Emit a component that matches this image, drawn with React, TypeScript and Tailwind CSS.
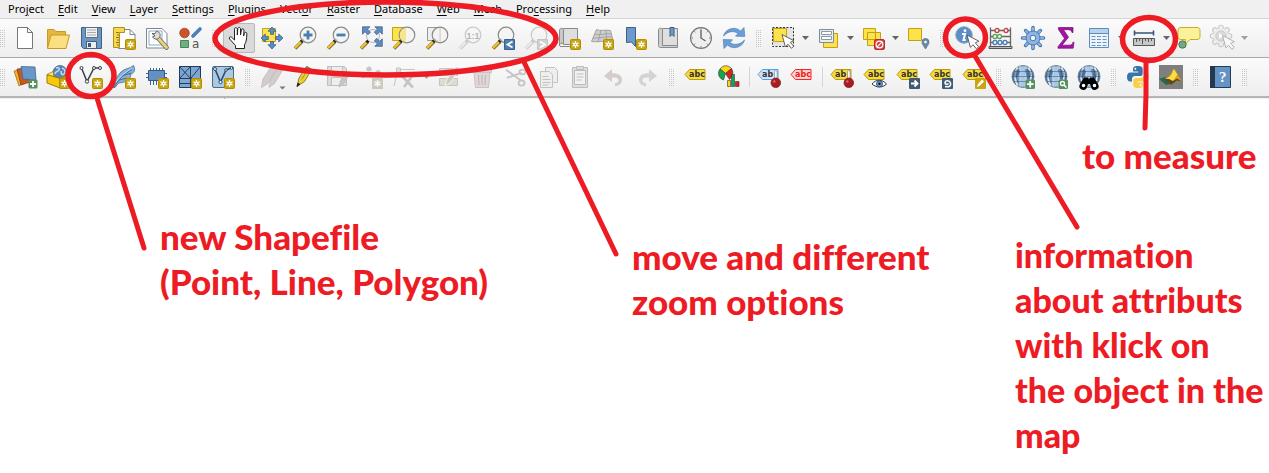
import type { ReactNode } from "react";

/* ---------- shared icon parts ---------- */

const Star = () => (
  <g>
    <rect x="13.5" y="13.5" width="10" height="10" rx="1" fill="#c9a50f" stroke="#b08f00" />
    <path d="M18.5 15v7M15.4 16.8l6.2 3.4M15.4 20.2l6.2-3.4" stroke="#fff" strokeWidth="1.3" />
    <circle cx="18.5" cy="18.5" r="1.9" fill="#fff" />
    <circle cx="18.5" cy="18.5" r=".7" fill="#c9a50f" />
  </g>
);

const Cursor = ({ x, y }: { x: number; y: number }) => (
  <path
    transform={`translate(${x} ${y})`}
    d="M0 0l3.4 12.4 2.6-2.7 3.4 4.1 2.3-2-3.4-4 3.6-1.6z"
    fill="#fff"
    stroke="#555"
    strokeWidth=".9"
  />
);

const Lens = ({ children, faded }: { children?: ReactNode; faded?: boolean }) => (
  <g opacity={faded ? 0.4 : 1}>
    <path d="M9 15.5L2 22.5" stroke={faded ? "#999" : "#8a7433"} strokeWidth="3.8" />
    <path d="M8.5 15.5L2 22" stroke={faded ? "#ddd" : "#f5c52c"} strokeWidth="2" />
    <path d="M10.8 13.2L8 16" stroke={faded ? "#888" : "#222"} strokeWidth="3.2" />
    <circle cx="15" cy="9" r="7.8" fill="#f4f4f2" fillOpacity=".82" stroke="#8b8b86" strokeWidth="1.2" />
    {children}
  </g>
);

const Tag = ({ text = "abc", red, blue }: { text?: string; red?: boolean; blue?: boolean }) => (
  <g>
    <path
      d="M5.5 4.5h15.5v10H5.5L1 9.5z"
      fill={red ? "#ffd6d6" : blue ? "#cfe4fb" : "#f6dc38"}
      stroke={red ? "#ff2020" : blue ? "#5a9be0" : "#b79a14"}
    />
    <text x="5" y="12" fontSize="8" fontWeight="700" fontFamily="DejaVu Sans, sans-serif" fill={red ? "#f01818" : "#333"}>
      {text}
    </text>
  </g>
);

const Pin = () => (
  <g>
    <rect x="17.5" y="5.5" width="2.6" height="10" rx="1.3" fill="#fff" stroke="#888" strokeWidth=".7" />
    <circle cx="18.8" cy="17.8" r="4.8" fill="#a81c22" stroke="#7d1216" strokeWidth=".7" />
    <circle cx="17.3" cy="16.5" r="1.2" fill="#d46a6e" />
  </g>
);

const Globe = () => (
  <g>
    <circle cx="12" cy="11.5" r="11" fill="#6b9acb" stroke="#7d8a98" />
    <path d="M4.5 3.5c-4 5-4 11 0 16l3-1c-2-5-2-9 0-14zM19.5 3.5c4 5 4 11 0 16l-3-1c2-5 2-9 0-14z" fill="#46719f" />
    <path d="M6.5 2.5C3.5 8 3.5 15 6.5 20.5M17.5 2.5c3 5.5 3 12.5 0 18" stroke="#e4e4e2" strokeWidth="2" />
    <path d="M9.5 1.5h5v20h-5z" fill="#a9c8e6" />
    <path d="M9 1.5v20M15 1.5v20" stroke="#e9eef3" />
    <path d="M1 11.5h22M3 6.5h18M3 16.5h18" stroke="#29486b" strokeWidth=".8" opacity=".6" />
    <path d="M5 5c2-2 4 0 4 2s-2 3-3 5-2 0-3-1 0-4 2-6zM15 4c3 0 4 2 5 4s-1 5-2.5 6-2-4-3-6-1-4 .5-4z" fill="#294b72" opacity=".5" />
  </g>
);

const arrowUp = "M12 1l4 4.3h-2.5v3h-3v-3H8z";
const swoosh = "M1.5 10C3 3 13-.5 18.5 5L22 1.5l.8 9-9.3-.3L16 7.5C12 4.5 6 5 1.5 10z";
const gearTeeth = "M11 1.5v17M2.5 10h17M5 4l12 12M17 4L5 16";

const icons: Record<string, ReactNode> = {
  newFile: <path d="M4.5 1.5h10l5 5v16h-15zM14.5 1.5v5h5" fill="#fff" stroke="#777" />,
  open: (
    <g stroke="#c99a20" strokeLinejoin="round">
      <path d="M1.5 21.5v-18h6.5l2 2h9.5v16z" fill="#e3b740" />
      <path d="M1.5 22.5l3.5-13.5h18.5l-3.5 13.5z" fill="#fbdf83" />
    </g>
  ),
  save: (
    <g>
      <path d="M2.5 1.5h20v21h-18l-2-2z" fill="#6c96c3" stroke="#41617f" />
      <path d="M6.5 1.5h12v10h-12z" fill="#f2f2ee" stroke="#56718c" />
      <path d="M8 4h9M8 6.5h9M8 9h9" stroke="#aaa" />
      <path d="M7.5 15.5h10v7h-10z" fill="#eee" stroke="#41617f" />
      <path d="M9 17h3v4H9z" fill="#3d5d7c" />
    </g>
  ),
  layout: (
    <g>
      <path d="M6.5 3.5H18l5 5v14H6.5z" fill="#fff" stroke="#7c8794" />
      <path d="M18 3.5v5h5" stroke="#7c8794" />
      <path d="M1.5 1.5h11v5h-5v15h-6z" fill="#f5d84e" stroke="#b3901a" />
      <path d="M4 6.5h3M5 9h2M4 11.5h3M5 14h2M4 16.5h3M5 19h2" stroke="#8f7110" />
      <Star />
    </g>
  ),
  manager: (
    <g>
      <path d="M1.5 2.5H17l5 5v14.5H1.5z" fill="#fff" stroke="#7c8794" />
      <path d="M4 5h13v14H4z" stroke="#8ba9cc" />
      <path d="M12.5 11.5l9 10" stroke="#6d6a55" strokeWidth="4.6" strokeLinecap="round" />
      <path d="M13 12l8.5 9.5" stroke="#e6d27d" strokeWidth="3" strokeLinecap="round" />
      <path d="M7 7.5l3 .2 1.5-2.5C15 6 16 9 14.5 11.5c-2 2.5-5.5 2-7-.7l2.5-1z" fill="#ddd" stroke="#555" strokeWidth=".9" />
    </g>
  ),
  style: (
    <g>
      <circle cx="6.5" cy="7" r="4.8" fill="#cb5429" stroke="#9a4020" strokeWidth=".7" />
      <path d="M15 10L22 3" stroke="#4d7fb8" strokeWidth="3.6" strokeLinecap="round" />
      <path d="M2.5 14.5h8v7h-8z" fill="#74ad83" stroke="#3f8a56" />
      <text x="14" y="22" fontSize="12" fontFamily="DejaVu Sans, sans-serif" fill="#555">a</text>
    </g>
  ),
  hand: (
    <path
      d="M8.5 14V3.2c0-2 2.5-2 2.8 0V9l.5-6.2c.2-2 2.7-1.8 2.7 0V9l.9-5c.4-1.8 2.7-1.5 2.6.3L17.6 10l.8-2.8c.5-1.6 2.6-1 2.5.6-.3 5-.5 8-2.4 11v3.7H9.5v-3L3.6 13c-1-1.7.8-2.9 2.1-1.7z"
      transform="translate(-1 0)"
      fill="#fff"
      stroke="#222"
      strokeLinejoin="round"
    />
  ),
  panSel: (
    <g>
      <path d="M2.5 2.5h13v13h-13z" fill="#fce34c" stroke="#c3a018" />
      <g fill="#5c8dc4" stroke="#31557c" strokeWidth=".7">
        <path d={arrowUp} />
        <path d={arrowUp} transform="rotate(90 12 12)" />
        <path d={arrowUp} transform="rotate(180 12 12)" />
        <path d={arrowUp} transform="rotate(270 12 12)" />
      </g>
    </g>
  ),
  zoomIn: <Lens><path d="M15 4.5v9M10.5 9h9" stroke="#4b7db5" strokeWidth="2.8" /></Lens>,
  zoomOut: <Lens><path d="M10.5 9h9" stroke="#4b7db5" strokeWidth="2.8" /></Lens>,
  zoomFull: (
    <g>
      <path d="M9 15.5L2 22.5" stroke="#8a7433" strokeWidth="3.6" />
      <path d="M8.5 15.5L2 22" stroke="#f5c52c" strokeWidth="2" />
      <path d="M10.5 13.5L7.5 16.5" stroke="#222" strokeWidth="3" />
      <circle cx="14" cy="10" r="6.5" fill="#f4f4f4" stroke="#b5b5b5" />
      <g fill="#5c8dc4" stroke="#38597b" strokeWidth=".7">
        <path d="M3.5.8h7.5L8.5 3.2l3 3-2.5 2.5-3-3-2.5 2.6z" />
        <path d="M23.3.8v7.5l-2.5-2.6-3 3-2.5-2.5 3-3L15.8.8z" />
        <path d="M23.3 20.3h-7.5l2.5-2.5-3-3 2.5-2.5 3 3 2.5-2.5z" />
      </g>
    </g>
  ),
  zoomSel: (
    <g>
      <path d="M.5 1.5h13v13H.5z" fill="#fce34c" stroke="#c3a018" />
      <Lens><path d="M9 5c1-2 3-3 5-3v14c-4 0-7-4-6-9z" fill="#f4e68c" /></Lens>
    </g>
  ),
  zoomLayer: (
    <g>
      <path d="M2.5 1.5h13v13h-13z" fill="#eee" stroke="#999" />
      <Lens><path d="M15 2v14" stroke="#d4d4ca" strokeWidth="1.2" /></Lens>
    </g>
  ),
  zoomNative: (
    <Lens faded>
      <text x="8.5" y="12.5" fontSize="9" fontWeight="700" fontFamily="Liberation Sans, sans-serif" fill="#555">1:1</text>
    </Lens>
  ),
  zoomLast: (
    <g>
      <Lens />
      <path d="M13.5 13.5h10v10h-10z" fill="#4d7fb5" stroke="#38618f" />
      <path d="M21.5 15.5l-5 3 5 3" stroke="#fff" strokeWidth="1.8" />
    </g>
  ),
  zoomNext: (
    <g>
      <Lens faded />
      <path d="M13.5 13.5h10v10h-10z" fill="#d0d0d0" stroke="#c4c4c4" />
      <path d="M16 15.5l5 3-5 3" stroke="#fff" strokeWidth="1.8" />
    </g>
  ),
  mapView: (
    <g>
      <path d="M6.5 2.5h14v16h-14z" fill="#dedede" stroke="#888" />
      <path d="M2.5 4.5c0-3 4-3 4 0v13c-2-1-4 0-4 2.5z" fill="#c8c8c8" stroke="#888" />
      <path d="M3 20.5h12" stroke="#888" />
      <Star />
    </g>
  ),
  map3d: (
    <g>
      <path d="M6.5 3.5c3 2 8 0 14 1l2.5 10c-6-1-10 2-21.5 1z" fill="#cfcfcf" stroke="#a2a2a2" />
      <path d="M4.5 8c5 2 10-1 17 0M3 12c6 1 12-2 19-1M11 4L8 16M16 4l.5 11" stroke="#a2a2a2" />
      <Star />
    </g>
  ),
  bookmarkNew: (
    <g>
      <path d="M3.5 1.5h9v19l-4-4.5-5 .5z" fill="#6c9aca" stroke="#3c5f85" />
      <Star />
    </g>
  ),
  bookmarks: (
    <g>
      <path d="M6.5 2.5h15v17h-15z" fill="#dfdfdf" stroke="#8a8a8a" />
      <path d="M2.5 4c0-2.5 4-2.5 4 0v15.5h15v2h-17c-2 0-2-1.5-2-3z" fill="#d0d0d0" stroke="#8a8a8a" />
      <path d="M14 1.5h4v9l-2-2-2 2z" fill="#6c9aca" stroke="#3c5f85" />
    </g>
  ),
  clock: (
    <g>
      <circle cx="12" cy="12" r="10.4" fill="#efefef" stroke="#777" strokeWidth="1.2" />
      <path d="M12 4v8l4.5 3" stroke="#666" strokeWidth="1.4" />
      <path d="M12 2.5v1.5M12 20v1.5M2.5 12H4M20 12h1.5M5.3 5.3l1 1M17.7 17.7l1 1M18.7 5.3l-1 1M5.3 18.7l1-1" stroke="#777" />
    </g>
  ),
  refresh: (
    <g fill="#6b9ed6" stroke="#457bb5" strokeWidth=".6">
      <path d={swoosh} />
      <path d={swoosh} transform="rotate(180 12 12)" />
    </g>
  ),
  select: (
    <g>
      <path d="M1.5 1.5h21v19h-21z" fill="#e4e4e0" stroke="#333" strokeDasharray="2 1.5" />
      <path d="M2.5 2.5h13v13h-13z" fill="#fce34c" stroke="#c3a018" />
      <Cursor x={11} y={8.5} />
    </g>
  ),
  selectForm: (
    <g>
      <path d="M7.5 7.5h14v14h-14z" fill="#fce34c" stroke="#c3a018" />
      <path d="M3.5 3.5h14v13h-14z" fill="#e9edf1" stroke="#7f8d9b" />
      <path d="M5.5 5.5h10v3h-10zM5.5 10.5h10v3h-10z" fill="#fff" stroke="#8b98a6" />
    </g>
  ),
  deselect: (
    <g>
      <path d="M2.5 2.5h12v11h-12zM6.5 6.5h13v13h-13z" fill="#fce34c" stroke="#c3a018" />
      <rect x="13.5" y="13.5" width="10" height="10" rx="1.5" fill="#d84040" stroke="#b92b2b" />
      <circle cx="18.5" cy="18.5" r="3.4" stroke="#fff" strokeWidth="1.2" />
      <path d="M16.2 20.8l4.6-4.6" stroke="#fff" strokeWidth="1.2" />
    </g>
  ),
  selectLoc: (
    <g>
      <path d="M2.5 2.5h13v12h-13z" fill="#fce34c" stroke="#c3a018" />
      <path d="M19.5 23c-1.5-3-3.5-4.5-3.5-7a3.5 3.5 0 017 0c0 2.5-2 4-3.5 7z" fill="#6c8ba3" stroke="#4d6c85" strokeWidth=".7" />
      <circle cx="19.5" cy="16" r="1.3" fill="#fff" />
    </g>
  ),
  info: (
    <g>
      <circle cx="9" cy="9" r="8.3" fill="#5d8dc6" stroke="#8fa8c4" />
      <circle cx="10" cy="4.7" r="1.4" fill="#fff" />
      <path d="M7 8h3l-1.5 6h2.2" stroke="#fff" strokeWidth="2" />
      <Cursor x={12} y={9} />
    </g>
  ),
  abacus: (
    <g strokeWidth="1.3">
      <path d="M2.5 1.5v20M22.5 1.5v20M3 4.5h19M3 10.5h19M3 16.5h19" stroke="#666" />
      <path d="M1 20.5h23v2H1z" fill="#bbb" stroke="#555" strokeWidth="1" />
      <g fill="#fff">
        <g stroke="#c84040"><circle cx="9" cy="4.5" r="2" /><circle cx="18" cy="4.5" r="2" /></g>
        <g stroke="#5aa35a"><circle cx="7" cy="10.5" r="2" /><circle cx="11.5" cy="10.5" r="2" /></g>
        <g stroke="#4b7db5"><circle cx="7" cy="16.5" r="2" /><circle cx="12" cy="16.5" r="2" /><circle cx="17" cy="16.5" r="2" /></g>
      </g>
    </g>
  ),
  gear: (
    <g>
      <path d="M12 1.5v21M1.5 12h21M4.6 4.6l14.8 14.8M19.4 4.6L4.6 19.4" stroke="#4a78b0" strokeWidth="3.6" strokeLinecap="round" />
      <path d="M12 2v20M2 12h20M5 5l14 14M19 5L5 19" stroke="#8db4e2" strokeWidth="2" strokeLinecap="round" />
      <circle cx="12" cy="12" r="7" fill="#8db4e2" stroke="#4a78b0" />
      <circle cx="12" cy="12" r="2.8" fill="#f3f3f3" stroke="#4a78b0" />
    </g>
  ),
  sigma: <path d="M4.5 1.5h14.5v5h-1c-.5-2-1.5-2.8-4-2.8H9.5l5 7.5-6.5 8h7c2.5 0 3.5-1 4-3h1l-.8 6H4v-1.5l6.5-8.2L4.5 3.5z" fill="#a613a6" stroke="#6d0f75" strokeWidth=".7" />,
  table: (
    <g>
      <path d="M2.5 2.5h19v19h-19z" fill="#edf4fb" stroke="#5d8cc0" />
      <path d="M3 3h18v4H3z" fill="#b8d1ec" />
      <path d="M3 7.5h18" stroke="#5d8cc0" />
      <path d="M4.5 10.5h4M10 10.5h4M15.5 10.5h4M4.5 13.5h4M10 13.5h4M15.5 13.5h4M4.5 16.5h4M10 16.5h4M15.5 16.5h4M4.5 19.5h4M10 19.5h4M15.5 19.5h4" stroke="#6d94bf" />
    </g>
  ),
  measure: (
    <g>
      <path d="M2 7h20M2.5 4.5v5M21.5 4.5v5" stroke="#35557c" strokeWidth="1.6" />
      <path d="M1.5 12.5h21v7h-21z" fill="#c8c8c8" stroke="#555" />
      <path d="M4.5 13v3M7.5 13v2M10.5 13v5M13.5 13v2M16.5 13v3M19.5 13v2" stroke="#555" />
    </g>
  ),
  tip: (
    <g>
      <path d="M4 1.5h16c2 0 3 1 3 3v6c0 2-1 3-3 3h-7L7 19.5l1.5-6H4c-2 0-3-1-3-3v-6c0-2 1-3 3-3z" fill="#fbf19b" stroke="#c9ac26" />
      <circle cx="5.5" cy="18.5" r="3.7" fill="#76a983" stroke="#447951" />
    </g>
  ),
  action: (
    <g opacity=".45">
      <path d={gearTeeth} stroke="#888" strokeWidth="5.6" strokeLinecap="round" />
      <path d={gearTeeth} stroke="#e4e4e4" strokeWidth="3.8" strokeLinecap="round" />
      <circle cx="11" cy="10" r="7.4" fill="#e4e4e4" />
      <circle cx="11" cy="10" r="5.2" fill="#b8b8b8" stroke="#999" />
      <path d="M9 7l5 3-5 3z" fill="#fff" />
      <Cursor x={12.5} y={9.5} />
    </g>
  ),

  dataSource: (
    <g>
      <path d="M1 6l10-2 3 12-8 5z" fill="#f0b32c" stroke="#a37414" strokeWidth=".8" />
      <path d="M4 4l11-1 2 14-9 3z" fill="#c75a22" stroke="#8a3e17" strokeWidth=".8" />
      <path d="M8 1.5l14 .5 1 13-13-1z" fill="#6a97c8" stroke="#3d6694" strokeWidth=".8" />
      <rect x="15.5" y="14.5" width="9" height="9" rx="1.5" fill="#579060" />
      <path d="M20 16v6M17 19h6" stroke="#fff" strokeWidth="1.8" />
    </g>
  ),
  geopackage: (
    <g>
      <circle cx="14" cy="7.5" r="7" fill="#5685b6" stroke="#3d6286" strokeWidth=".7" />
      <path d="M10 3c2-1 4 0 3 2s-4 1-4 4M16 3c3 1 4 4 2 6s-3-1-3-3" stroke="#c7d7e6" strokeWidth="1.6" />
      <path d="M1 9.5l13 4v9.5l-13-5z" fill="#f4c910" stroke="#9c7d05" />
      <path d="M14 13.5l7-3.5v9l-7 4z" fill="#d5a70b" stroke="#9c7d05" />
      <path d="M1 9.5l6-3 1 5z" fill="#f8e48a" stroke="#9c7d05" strokeWidth=".8" />
      <Star />
    </g>
  ),
  shapefile: (
    <g>
      <path d="M2.5 3L8 16.5 15 3h6" stroke="#333e4a" strokeWidth="1.5" />
      <g fill="#fff" stroke="#333e4a"><circle cx="2.5" cy="3" r="1.5" /><circle cx="8" cy="16.5" r="1.7" /><circle cx="15" cy="3" r="1.5" /><circle cx="21" cy="3" r="1.5" /></g>
      <Star />
    </g>
  ),
  spatialite: (
    <g>
      <path d="M1 22.5C2 16 5 11 9 7c4-4 9-3 12.5-6.5 2 4 1 6-1 8l-3 1 1.5 1c-2 5-6 7-12.5 7.5L3 22.5z" fill="#86b2d8" stroke="#456d92" strokeWidth=".8" />
      <path d="M2 22.5C6 15 12 9 20 4.5M7 15l8-2M10 11l9-3" stroke="#456d92" />
      <path d="M4 17C8 11 14 7 20 3" stroke="#c4daee" />
      <Star />
    </g>
  ),
  memory: (
    <g>
      <path d="M5.5 3v17M8.5 3v17M11.5 3v17M14.5 3v17M17.5 3v17M1 8.5h21M1 12.5h21" stroke="#3d6289" />
      <path d="M3.5 5.5h16v10h-16z" fill="#6391c2" stroke="#345a82" />
      <Star />
    </g>
  ),
  mesh: (
    <g>
      <path d="M1.5 1.5h21v21h-21z" fill="#7ca7d3" stroke="#243c5c" />
      <path d="M1.5 13.5h21M12.5 1.5v21M1.5 1.5l11 12M12.5 1.5l-11 12M22.5 1.5l-10 12M1.5 18.5h11" stroke="#243c5c" />
      <Star />
    </g>
  ),
  virtual: (
    <g>
      <rect x="1.5" y="1.5" width="21" height="21" rx="1.5" fill="#acc9e4" stroke="#4b6b8c" />
      <path d="M4 4l5.5 13L15 5l5-2" stroke="#2d4a66" strokeWidth="1.6" />
      <g fill="#fff" stroke="#2d4a66"><circle cx="4" cy="4" r="1.5" /><circle cx="9.5" cy="17" r="1.6" /><circle cx="15" cy="5" r="1.3" /><circle cx="20.5" cy="3" r="1.3" /></g>
      <Star />
    </g>
  ),
  edits: (
    <g>
      <g fill="#d3cccc" stroke="#c0b9b9" strokeWidth=".8">
        <path d="M1.5 22.5L3 14 10.5 2.5l5.5 2.5-8 13.5z" />
        <path d="M9 22.5l1.5-8 8-12.5 4.5 2.5-8.5 14z" />
      </g>
      <path d="M19.5 21.5h6l-3 3z" fill="#777" />
    </g>
  ),
  pencil: (
    <g strokeWidth=".8">
      <path d="M4 21.5L6 13l7.5-11.5 5 3L11.5 16.5z" fill="#ecd02f" stroke="#716420" />
      <path d="M14 1.5l5 3-1.5 2.5-5-3.2z" fill="#9a9a9a" stroke="#666" />
      <path d="M4 21.5l.9-3.5 2 1.3z" fill="#222" stroke="#222" />
      <path d="M8.5 14.5l6.5-10" stroke="#9a8315" />
    </g>
  ),
  saveEdits: (
    <g fill="#eee" stroke="#c2bebe">
      <path d="M1.5 1.5h17l2 2v17h-19z" fill="#dedada" />
      <path d="M5.5 1.5h11v7h-11zM5.5 12.5h10v8h-10z" />
      <path d="M13 22l1.5-6 6-8 2.5 2-5.5 9z" fill="#cbc5c2" />
    </g>
  ),
  addPoint: (
    <g fill="#c9c5c5">
      <circle cx="10" cy="4" r="2.6" /><circle cx="4" cy="10.5" r="2.6" /><circle cx="19" cy="7.5" r="2.6" />
      <g opacity=".7"><path d="M13 13h11v11H13z" fill="#bcb9a9" /><path d="M18.5 15v7M15.4 16.8l6.2 3.4M15.4 20.2l6.2-3.4" stroke="#fff" strokeWidth="1.4" /></g>
    </g>
  ),
  vertex: (
    <g stroke="#c8c3c3">
      <path d="M2 21L6 4.5h17" />
      <path d="M4.5 3h4v4h-4z" fill="#ddd" />
      <path d="M9 10l12 12.5M21 10l-9 12" strokeWidth="2.6" />
    </g>
  ),
  modify: (
    <g fill="#dedcd2" stroke="#c8c5ba">
      <path d="M2.5 3.5h18v7h-18zM2.5 13.5h18v7h-18z" />
      <path d="M8 21l2-7L19 1.5l3.5 2L14 17z" fill="#cdc8c3" stroke="#f4f4f4" />
    </g>
  ),
  trash: (
    <g stroke="#ccc0c1" fill="#e0d7d7">
      <path d="M4 7.5h16l-1.5 15h-13zM2.5 4.5h19v3h-19zM9.5 4.5v-2h5v2" />
      <path d="M8.5 10l.5 10M12 10v10M15.5 10l-.5 10" stroke="#bfb2b3" />
    </g>
  ),
  cut: (
    <g stroke="#c8c2c2" strokeWidth="1.8">
      <path d="M2 6l17 9M4 14l14-7" transform="rotate(8 12 12)" />
      <ellipse cx="19.5" cy="7" rx="3" ry="2.3" /><ellipse cx="18.5" cy="18" rx="3" ry="2.6" />
    </g>
  ),
  copy: (
    <g fill="#eeeeec" stroke="#c2c2c2">
      <path d="M9.5 2.5h9l3 3v12h-12z" /><path d="M4.5 6.5h9l3 3v13h-12z" />
      <path d="M6.5 11.5h6M6.5 14.5h8M6.5 17.5h8M6.5 20h6" />
    </g>
  ),
  paste: (
    <g fill="#ddd" stroke="#c0bcbc">
      <path d="M3.5 2.5h15v20h-15z" /><path d="M5.5 5.5h11v14h-11z" fill="#f2f2f2" /><path d="M7.5 1.5h7v3h-7zM7.5 9h7M7.5 12h7M7.5 15h5" />
    </g>
  ),
  undo: <path d="M2 11l8-7v4.3c7 0 10 2.5 10 6.5 0 4-3 6-7 6.5v-3c2.5-.5 3.5-1.5 3.5-3 0-2-2-2.8-6.5-2.8v4.5z" fill="#d4cccb" />,
  redo: <path d="M22 11l-8-7v4.3c-7 0-10 2.5-10 6.5 0 4 3 6 7 6.5v-3c-2.5-.5-3.5-1.5-3.5-3 0-2 2-2.8 6.5-2.8v4.5z" fill="#d3d5d2" />,
  tag: <Tag />,
  diagram: (
    <g strokeWidth=".6" stroke="#333">
      <path d="M8.5 8.5L3 4A7 7 0 0114.5 3.5z" fill="#fbd516" /><path d="M8.5 8.5L3 4a7 7 0 003.5 11z" fill="#12a84a" /><path d="M8.5 8.5l6-5c2 3 2 8-2 11z" fill="#d8201d" />
      <path d="M10.5 15.5h3v6h-3z" fill="#fbd516" /><path d="M14.5 9.5h3v12h-3z" fill="#12a84a" /><path d="M18.5 16.5h3.5v5h-3.5z" fill="#d8201d" />
    </g>
  ),
  pinBlue: <g><Tag text="ab" blue /><Pin /></g>,
  tagRed: <Tag red />,
  pinTag: <g><Tag text="ab" /><Pin /></g>,
  showTag: (
    <g>
      <Tag />
      <path d="M9 19c4-5 10-5 14.5 0-4 4-10 4-14.5 0z" fill="#fff" stroke="#333" />
      <circle cx="16.5" cy="18.8" r="3" fill="#6aa0dc" stroke="#315a8b" /><circle cx="16.5" cy="18.8" r="1.2" fill="#111" />
    </g>
  ),
  moveTag: <g><Tag /><rect x="13" y="13" width="11" height="11" rx="1" fill="#405a70" /><path d="M15 18.5h5M18.5 15.5l3 3-3 3" stroke="#fff" strokeWidth="2" /></g>,
  rotateTag: <g><Tag /><rect x="13" y="13" width="11" height="11" rx="1" fill="#405a70" /><path d="M16 21.5c5 1 6-1 5.5-3.5-1-3-5-3-5.5-.5 0 2 2 2.5 3.5 1" stroke="#fff" strokeWidth="1.6" /></g>,
  editTag: <g><Tag /><rect x="13" y="13" width="11" height="11" rx="1" fill="#c9a50f" /><path d="M15 22l1-3 4-4.5 2 2-4.5 4.5z" fill="#fff" /></g>,
  globeAdd: <g><Globe /><rect x="14.5" y="14.5" width="9.5" height="9.5" rx="1.5" fill="#579060" /><path d="M19.2 16v6.5M16 19.2h6.5" stroke="#fff" strokeWidth="1.8" /></g>,
  globeSearch: <g><Globe /><rect x="14.5" y="14.5" width="9.5" height="9.5" rx="1.5" fill="#579060" /><circle cx="18.5" cy="18.5" r="2" stroke="#fff" strokeWidth="1.3" /><path d="M20 20l2.5 2.5" stroke="#fff" strokeWidth="1.5" /></g>,
  globeFind: (
    <g>
      <Globe />
      <path d="M7 12.5h4l1 2 1-2h4l4.5 7.5a3.8 3.8 0 01-7.5 2l-1-3h-2l-1 3a3.8 3.8 0 01-7.5-2z" fill="#000" />
      <circle cx="6.5" cy="20.5" r="2.4" fill="#fff" stroke="#000" strokeWidth="1.2" /><circle cx="17.5" cy="20.5" r="2.4" fill="#fff" stroke="#000" strokeWidth="1.2" />
    </g>
  ),
  python: (
    <g>
      <path d="M11.8 1C7.5 1 7 2.7 7 4v2.5h5.3v1H4.5C2 7.5 1 9.5 1 12s1 4.5 3 4.5h2V14c0-2 1.5-3 3.2-3H14c1.5 0 2.7-1 2.7-2.6V4c0-1.7-1.2-3-4.9-3z" fill="#3775a8" />
      <path d="M12.2 23c4.3 0 4.8-1.7 4.8-3v-2.5h-5.3v-1h7.8c2.5 0 3.5-2 3.5-4.5s-1-4.5-3-4.5h-2V10c0 2-1.5 3-3.2 3H10c-1.5 0-2.7 1-2.7 2.6V20c0 1.7 1.2 3 4.9 3z" fill="#f8cf45" />
      <circle cx="9.3" cy="3.8" r="1" fill="#fff" /><circle cx="14.7" cy="20.2" r="1" fill="#fff" />
    </g>
  ),
  surface: (
    <g>
      <path d="M0 0h24v24H0z" fill="#7f7f7f" />
      <path d="M0 14l6-2 6 4 2 2-7 2z" fill="#246a50" />
      <path d="M6 13.5c4-1 6-5 8-8.5 2-2 3 1 4 4l5 7.5-5-1-6 4.5z" fill="#e0a012" />
      <path d="M14.5 4c-1 5-3 8-7 9.5l6 3 5-7z" fill="#f8df43" />
      <path d="M5 14l7 6 6-4.5 5 1-5-3-4 2.5-4-2z" fill="#5c4a18" />
    </g>
  ),
  help: (
    <g>
      <path d="M2.5 1.5h20v21h-20z" fill="#6394c5" stroke="#223c58" />
      <path d="M2 1h5v22H2z" fill="#24384f" />
      <text x="11" y="17" fontSize="15" fontFamily="Liberation Serif, serif" fontWeight="700" fill="#fff">?</text>
    </g>
  ),
};

/* ---------- toolbar content ---------- */

type Item =
  | { kind: "tool"; icon: string; label: string; menu?: boolean; active?: boolean; dim?: boolean }
  | { kind: "handle" }
  | { kind: "rule" };

const t = (icon: string, label: string, extra: { menu?: boolean; active?: boolean; dim?: boolean } = {}): Item => ({
  kind: "tool",
  icon,
  label,
  ...extra,
});
const handle: Item = { kind: "handle" };
const rule: Item = { kind: "rule" };

const projectBar: Item[] = [
  t("newFile", "New Project"), t("open", "Open Project"), t("save", "Save Project"), t("layout", "New Print Layout"),
  t("manager", "Layout Manager"), t("style", "Style Manager"), handle,
  t("hand", "Pan Map", { active: true }), t("panSel", "Pan Map to Selection"), t("zoomIn", "Zoom In"), t("zoomOut", "Zoom Out"),
  t("zoomFull", "Zoom Full"), t("zoomSel", "Zoom to Selection"), t("zoomLayer", "Zoom to Layer"),
  t("zoomNative", "Zoom to Native Resolution", { dim: true }), t("zoomLast", "Zoom Last"), t("zoomNext", "Zoom Next", { dim: true }),
  t("mapView", "New Map View"), t("map3d", "New 3D Map View"), t("bookmarkNew", "New Spatial Bookmark"),
  t("bookmarks", "Show Spatial Bookmarks"), t("clock", "Temporal Controller"), t("refresh", "Refresh"), handle,
  t("select", "Select Features", { menu: true }), t("selectForm", "Select by Value", { menu: true }),
  t("deselect", "Deselect Features", { menu: true }), t("selectLoc", "Select by Location"), handle,
  t("info", "Identify Features"), t("abacus", "Field Calculator"), t("gear", "Processing Toolbox"), t("sigma", "Statistical Summary"),
  t("table", "Open Attribute Table", { menu: true }), t("measure", "Measure Line", { menu: true }), t("tip", "Map Tips"),
  t("action", "Run Feature Action", { menu: true, dim: true }),
];

const layerBar: Item[] = [
  t("dataSource", "Data Source Manager"), t("geopackage", "New GeoPackage Layer"), t("shapefile", "New Shapefile Layer"),
  t("spatialite", "New SpatiaLite Layer"), t("memory", "New Temporary Scratch Layer"), t("mesh", "New Mesh Layer"),
  t("virtual", "New Virtual Layer"), handle,
  t("edits", "Current Edits", { dim: true }), t("pencil", "Toggle Editing"), t("saveEdits", "Save Layer Edits", { dim: true }),
  t("addPoint", "Add Point Feature", { dim: true }), t("vertex", "Vertex Tool", { dim: true, menu: true }),
  t("modify", "Modify Attributes", { dim: true }), t("trash", "Delete Selected", { dim: true }), t("cut", "Cut Features", { dim: true }),
  t("copy", "Copy Features", { dim: true }), t("paste", "Paste Features", { dim: true }), t("undo", "Undo", { dim: true }),
  t("redo", "Redo", { dim: true }), handle,
  t("tag", "Layer Labeling Options"), t("diagram", "Layer Diagram Options"), rule,
  t("pinBlue", "Highlight Pinned Labels"), t("tagRed", "Toggle Unplaced Labels"), rule,
  t("pinTag", "Pin Labels"), t("showTag", "Show Labels"), t("moveTag", "Move Label"), t("rotateTag", "Rotate Label"),
  t("editTag", "Change Label Properties"), handle,
  t("globeAdd", "Add Web Service"), t("globeSearch", "Search Web Services"), t("globeFind", "Metadata Search"), handle,
  t("python", "Python Console"), t("surface", "Surface Plot"), handle,
  t("help", "Help Contents"), handle,
];

const menus: [string, string, string][] = [
  ["Pro", "j", "ect"], ["", "E", "dit"], ["", "V", "iew"], ["", "L", "ayer"], ["", "S", "ettings"], ["", "P", "lugins"],
  ["Vect", "o", "r"], ["", "R", "aster"], ["", "D", "atabase"], ["", "W", "eb"], ["", "M", "esh"], ["Pro", "c", "essing"],
  ["", "H", "elp"],
];

const Dots = () => (
  <svg className="h-[17px] w-[5px] shrink-0" viewBox="0 0 5 17" aria-hidden="true">
    <path d="M.5 0v17M2.5 0v17M4.5 0v17" stroke="#c6c6c6" strokeDasharray="1 1" />
  </svg>
);

function Toolbar({ items, label }: { items: Item[]; label: string }) {
  return (
    <div
      role="toolbar"
      aria-label={label}
      className="flex items-center gap-px overflow-hidden bg-linear-to-b from-[#fbfbfb] to-[#eeeeee] py-1"
    >
      <div className="flex w-2 shrink-0"><Dots /></div>
      {items.map((item, i) => {
        if (item.kind === "handle")
          return <div key={i} className="flex w-[15px] shrink-0 justify-center"><Dots /></div>;
        if (item.kind === "rule")
          return <div key={i} className="flex w-1.5 shrink-0 justify-center"><div className="h-5 w-px bg-[#d4d4d4]" /></div>;
        return (
          <div key={i} className="flex shrink-0 gap-px">
            <button
              type="button"
              aria-label={item.label}
              aria-pressed={item.active}
              className={
                item.active
                  ? "flex h-[30px] w-8 items-center justify-center rounded-xs border border-[#b8b8b8] bg-[#dadada]"
                  : "flex h-[30px] w-8 items-center justify-center"
              }
            >
              <svg className="size-6 shrink-0 overflow-visible" viewBox="0 0 24 24" fill="none" aria-hidden="true">
                {icons[item.icon]}
              </svg>
            </button>
            {item.menu && (
              <button type="button" aria-label={`${item.label} options`} className="flex h-[30px] w-[11px] items-center justify-center">
                <svg className="h-1 w-[7px]" viewBox="0 0 7 4" aria-hidden="true">
                  <path d="M0 0h7L3.5 4z" fill={item.dim ? "#a0a0a0" : "#666666"} />
                </svg>
              </button>
            )}
          </div>
        );
      })}
    </div>
  );
}

const noteClass = "absolute whitespace-pre leading-[45px]";

export default function App() {
  return (
    <div className="relative min-h-screen overflow-hidden bg-white font-['Noto_Sans',sans-serif]">
      <header>
        <nav aria-label="Main menu" className="flex h-[18px] items-center gap-3.5 bg-[#f0f0f0] pl-2 text-[11px] leading-[18px] text-black">
          {menus.map(([a, key, b]) => (
            <button key={a + key + b} type="button" className="shrink-0">
              {a}<span className="underline underline-offset-2">{key}</span>{b}
            </button>
          ))}
        </nav>
        <div className="border-y border-t-[#d6d6d6] border-b-[#a9a9a9]"><Toolbar items={projectBar} label="Project and navigation" /></div>
        <div className="border-b-2 border-[#b5b5b5]"><Toolbar items={layerBar} label="Layers, editing and labels" /></div>
        <div className="flex h-px">
          <div className="w-[225px] border-r border-[#aaaaaa] bg-[#f0f0f0]" />
          <div className="flex-1 bg-[#f3f2e8]" />
        </div>
      </header>

      <svg className="pointer-events-none absolute top-0 left-0 h-[260px] w-[1269px] max-w-none" viewBox="0 0 1269 260" fill="none" stroke="#ed1c24" strokeWidth="5.5" strokeLinecap="round" aria-hidden="true">
        <ellipse cx="91" cy="75.5" rx="23" ry="21" />
        <path d="M97 98L144 248" strokeWidth="5" />
        <ellipse cx="385.5" cy="38.5" rx="170.5" ry="36.5" />
        <path d="M524 62L616 254" strokeWidth="5" />
        <ellipse cx="965.5" cy="37.5" rx="20" ry="18.5" />
        <path d="M975 56L1077 227" strokeWidth="5" />
        <ellipse cx="1149" cy="39" rx="26.5" ry="21.5" />
        <path d="M1146 62v32l-1 34" strokeWidth="5" />
      </svg>

      <main className="font-['Lato',sans-serif] text-[35px] font-black text-[#ed1c24] [font-variant-ligatures:none]">
        <p className={`${noteClass} top-[214px] left-[160px]`}>{"new Shapefile\n(Point, Line, Polygon)"}</p>
        <p className={`${noteClass} top-[234px] left-[632px]`}>{"move and different\nzoom options"}</p>
        <p className={`${noteClass} top-[133px] left-[1082px]`}>to measure</p>
        <p className={`${noteClass} top-[232px] left-[1015px] text-[34px]`}>{"information\nabout attributs\nwith klick on\nthe object in the\nmap"}</p>
      </main>
    </div>
  );
}
